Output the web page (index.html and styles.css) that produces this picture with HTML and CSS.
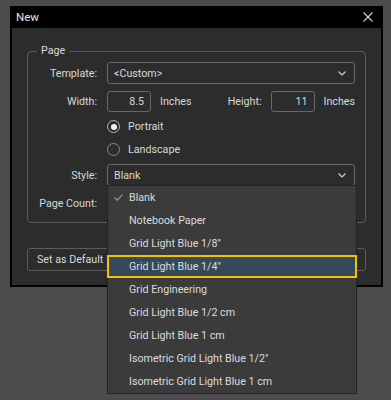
FILE: index.html
```html
<!DOCTYPE html>
<html lang="en">
<head>
  <meta charset="UTF-8">
  <meta name="viewport" content="width=device-width, initial-scale=1.0">
  <title>New</title>
  <link rel="stylesheet" href="styles.css">
</head>
<body>

  <div class="window">
    <div class="titlebar">
      <span class="title">New</span>
      <svg class="close" viewBox="0 0 10 10" width="10" height="10">
        <path d="M0.5 0.5 L9.5 9.5 M9.5 0.5 L0.5 9.5" stroke="#d6d6d6" stroke-width="1.1" fill="none" />
      </svg>
    </div>

    <div class="content">
      <fieldset class="group">
        <legend>Page</legend>
        <div class="form">
          <span class="lbl">Template:</span>
          <div class="select">
            <span>&lt;Custom&gt;</span>
            <svg class="chevron" viewBox="0 0 8 5" width="8" height="5">
              <path d="M0.5 0.5 L4 4 L7.5 0.5" stroke="#cfcfcf" stroke-width="1.2" fill="none" />
            </svg>
          </div>

          <span class="lbl">Width:</span>
          <div class="size-row">
            <div class="num">8.5</div>
            <span class="unit">Inches</span>
            <span class="lbl height-lbl">Height:</span>
            <div class="num">11</div>
            <span class="unit">Inches</span>
          </div>

          <span></span>
          <div class="radio checked"><span class="dot"></span>Portrait</div>

          <span></span>
          <div class="radio"><span class="dot"></span>Landscape</div>

          <span class="lbl">Style:</span>
          <div class="select">
            <span>Blank</span>
            <svg class="chevron" viewBox="0 0 8 5" width="8" height="5">
              <path d="M0.5 0.5 L4 4 L7.5 0.5" stroke="#cfcfcf" stroke-width="1.2" fill="none" />
            </svg>
          </div>

          <span class="lbl">Page Count:</span>
          <div class="select"><span>1</span></div>
        </div>
      </fieldset>

      <div class="buttons">
        <button class="btn">Set as Default</button>
        <span class="spacer"></span>
        <button class="btn wide">OK</button>
        <button class="btn wide">Cancel</button>
      </div>
    </div>
  </div>

  <!-- open list of the Style select -->
  <ul class="dropdown">
    <li class="item selected">
      <svg class="tick" viewBox="0 0 9 7" width="9" height="7">
        <path d="M0.5 3.5 L3.2 6.2 L8.5 0.6" stroke="#9a9a9a" stroke-width="1.1" fill="none" />
      </svg>
      Blank
    </li>
    <li class="item">Notebook Paper</li>
    <li class="item">Grid Light Blue 1/8"</li>
    <li class="item focused">Grid Light Blue 1/4"</li>
    <li class="item">Grid Engineering</li>
    <li class="item">Grid Light Blue 1/2 cm</li>
    <li class="item">Grid Light Blue 1 cm</li>
    <li class="item">Isometric Grid Light Blue 1/2"</li>
    <li class="item">Isometric Grid Light Blue 1 cm</li>
  </ul>

</body>
</html>
```

FILE: styles.css
```css
body {
  margin: 0;
  padding: 0;
  height: 400px;
  background-color: #4b4b4b;
  font-family: Roboto, "Liberation Sans", sans-serif;
  font-size: 10.7px;
  color: #d9d9d9;
  overflow: hidden;
  position: relative;
}

.window {
  margin: 6px 0 0 10px;
  width: 373px;
}

.titlebar {
  height: 22px;
  background-color: #000;
  display: flex;
  align-items: center;
  justify-content: space-between;
  padding: 0 10px 0 6px;
}

.title {
  font-size: 11.5px;
  color: #e8e8e8;
}

.close {
  display: block;
}

.content {
  background-color: #2c2c2c;
  border: 2px solid #000;
  border-top: none;
  padding: 16px 15px 14px 15px;
}

.group {
  margin: 0;
  padding: 0 10px 6px 0;
  border: 1px solid #5c5c5c;
  border-radius: 4px;
  min-width: 0;
}

.group legend {
  margin-left: 9px;
  padding: 0 4px;
  line-height: 14px;
  font-size: 10.7px;
}

.form {
  display: grid;
  grid-template-columns: 69px 248px;
  grid-template-rows: 30px 27px 23px 22px 30px 26px;
  column-gap: 10px;
  align-items: center;
}

.lbl {
  justify-self: end;
  white-space: nowrap;
}

.select {
  height: 22px;
  box-sizing: border-box;
  border: 1px solid #686868;
  border-radius: 3px;
  display: flex;
  align-items: center;
  justify-content: space-between;
  padding: 0 8px 0 6px;
}

.chevron {
  display: block;
}

.size-row {
  display: flex;
  align-items: center;
}

.num {
  width: 44px;
  height: 21px;
  box-sizing: border-box;
  border: 1px solid #686868;
  border-radius: 3px;
  text-align: right;
  line-height: 19px;
  padding-right: 6px;
}

.unit {
  margin-left: 9px;
}

.height-lbl {
  margin-left: auto;
  margin-right: 9px;
}

.radio {
  display: flex;
  align-items: center;
  gap: 8px;
}

.radio .dot {
  width: 13px;
  height: 13px;
  box-sizing: border-box;
  border: 1px solid #8a8a8a;
  border-radius: 50%;
  display: flex;
  align-items: center;
  justify-content: center;
}

.radio.checked .dot {
  border-color: #b5b5b5;
}

.radio.checked .dot::after {
  content: "";
  width: 6px;
  height: 6px;
  border-radius: 50%;
  background-color: #f2f2f2;
}

.buttons {
  margin-top: 25px;
  display: flex;
  gap: 8px;
}

.spacer {
  flex: 1;
}

.btn {
  height: 23px;
  padding: 0 9px;
  background-color: #2c2c2c;
  border: 1px solid #5c5c5c;
  border-radius: 3px;
  color: #d9d9d9;
  font-family: inherit;
  font-size: 10.7px;
}

.btn.wide {
  width: 80px;
}

.dropdown {
  position: absolute;
  left: 107px;
  top: 185px;
  width: 248px;
  margin: 0;
  padding: 0;
  list-style: none;
  background-color: #3b3b3b;
  border: 1px solid #232323;
}

.item {
  height: 23px;
  box-sizing: border-box;
  line-height: 23px;
  padding-left: 21px;
  position: relative;
  color: #dcdcdc;
  white-space: nowrap;
}

.tick {
  position: absolute;
  left: 6px;
  top: 8px;
}

.item.focused {
  margin: 0 -1px;
  padding-left: 20px;
  line-height: 19px;
  background-color: #34495c;
  border: 2px solid #f2c200;
}
```
